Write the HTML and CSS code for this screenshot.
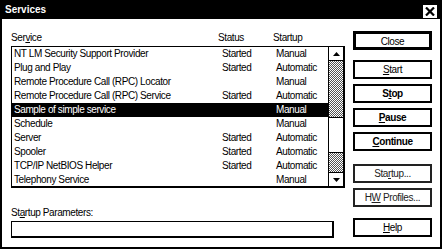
FILE: index.html
```html
<!DOCTYPE html>
<html lang="en">
<head>
    <meta charset="UTF-8">
    <title>Services</title>
    <link rel="stylesheet" href="styles.css">
</head>
<body>
    <div class="dialog">
        <div class="titlebar">
            <span class="title">Services</span>
            <span class="close-box">
                <svg width="10" height="9" viewBox="0 0 10 9"><path d="M1 0.5 L9 8.5 M9 0.5 L1 8.5" stroke="#000" stroke-width="2.2"/></svg>
            </span>
        </div>

        <div class="content">
            <div class="main">
                <div class="list-header">
                    <span>Ser<u>v</u>ice</span>
                    <span>Status</span>
                    <span>Startup</span>
                </div>

                <div class="listbox">
                    <div class="rows">
                        <div class="row"><span>NT LM Security Support Provider</span><span>Started</span><span>Manual</span></div>
                        <div class="row"><span>Plug and Play</span><span>Started</span><span>Automatic</span></div>
                        <div class="row"><span>Remote Procedure Call (RPC) Locator</span><span></span><span>Manual</span></div>
                        <div class="row"><span>Remote Procedure Call (RPC) Service</span><span>Started</span><span>Automatic</span></div>
                        <div class="row selected"><span>Sample of simple service</span><span></span><span>Manual</span></div>
                        <div class="row"><span>Schedule</span><span></span><span>Manual</span></div>
                        <div class="row"><span>Server</span><span>Started</span><span>Automatic</span></div>
                        <div class="row"><span>Spooler</span><span>Started</span><span>Automatic</span></div>
                        <div class="row"><span>TCP/IP NetBIOS Helper</span><span>Started</span><span>Automatic</span></div>
                        <div class="row"><span>Telephony Service</span><span></span><span>Manual</span></div>
                    </div>
                    <div class="scrollbar">
                        <div class="arrow arrow-up">
                            <svg width="7" height="4" viewBox="0 0 7 4"><polygon points="3.5,0 7,4 0,4" fill="#000"/></svg>
                        </div>
                        <div class="track track-top"></div>
                        <div class="thumb"></div>
                        <div class="track track-bottom"></div>
                        <div class="arrow arrow-down">
                            <svg width="7" height="4" viewBox="0 0 7 4"><polygon points="0,0 7,0 3.5,4" fill="#000"/></svg>
                        </div>
                    </div>
                </div>

                <label class="param-label" for="params">St<u>a</u>rtup Parameters:</label>
                <input class="param-input" id="params" type="text">
            </div>

            <div class="buttons">
                <button class="btn btn-default">Close</button>
                <button class="btn btn-start"><u>S</u>tart</button>
                <button class="btn btn-bold">S<u>t</u>op</button>
                <button class="btn btn-bold"><u>P</u>ause</button>
                <button class="btn btn-bold"><u>C</u>ontinue</button>
                <button class="btn btn-light btn-startup">Sta<u>r</u>tup...</button>
                <button class="btn btn-light">H<u>W</u> Profiles...</button>
                <button class="btn btn-help"><u>H</u>elp</button>
            </div>
        </div>
    </div>
</body>
</html>
```

FILE: styles.css
```css
body {
    margin: 0;
    background: #fff;
    font-family: "Liberation Sans", Arial, sans-serif;
    font-size: 10px;
    letter-spacing: -0.4px;
    color: #000;
    overflow: hidden;
}

.dialog {
    width: 442px;
    height: 249px;
    box-sizing: border-box;
    border: 2px solid #000;
    border-top: 0;
    background: #fff;
    display: flex;
    flex-direction: column;
}

.titlebar {
    height: 19px;
    background: #000;
    color: #fff;
    display: flex;
    justify-content: space-between;
    padding: 0 3px 0 3px;
}

.title {
    font-weight: bold;
    letter-spacing: 0;
    line-height: 19px;
}

.close-box {
    align-self: flex-end;
    margin-bottom: 1px;
    width: 14px;
    height: 13px;
    background: #fff;
    display: flex;
    justify-content: center;
    align-items: center;
}

.content {
    display: flex;
}

.main {
    width: 334px;
    padding: 12px 0 0 9px;
}

.list-header {
    height: 13px;
    line-height: 13px;
    display: grid;
    grid-template-columns: 207px 55px 1fr;
}

.listbox {
    margin-top: 2px;
    height: 142px;
    box-sizing: border-box;
    border: 1px solid #000;
    border-right-width: 2px;
    border-bottom-width: 2px;
    display: flex;
}

.rows {
    width: 316px;
}

.row {
    height: 14px;
    line-height: 14px;
    padding-left: 2px;
    display: grid;
    grid-template-columns: 208px 54px 1fr;
    white-space: nowrap;
}

.row.selected {
    background: #000;
    color: #fff;
}

.scrollbar {
    flex: 1;
    border-left: 1px solid #000;
    display: flex;
    flex-direction: column;
}

.arrow {
    height: 13px;
    display: flex;
    justify-content: center;
    align-items: center;
    background: #fff;
}

.arrow-up {
    border-bottom: 1px solid #000;
}

.arrow-down {
    border-top: 1px solid #000;
}

.track {
    background-image: repeating-conic-gradient(#555 0 25%, #fff 0 50%);
    background-size: 2px 2px;
}

.track-top {
    height: 56px;
}

.track-bottom {
    flex: 1;
}

.thumb {
    height: 34px;
    border-top: 1px solid #000;
    border-bottom: 1px solid #000;
    background: #fff;
}

.param-label {
    display: block;
    margin-top: 18px;
    height: 13px;
    line-height: 13px;
}

.param-input {
    display: block;
    margin: 2px 0 0 0;
    width: 323px;
    height: 17px;
    box-sizing: border-box;
    border: 1px solid #000;
    border-right-width: 2px;
    border-bottom-width: 2px;
    padding: 0;
    background: #fff;
}

.buttons {
    padding: 12px 0 0 8px;
    display: flex;
    flex-direction: column;
    gap: 5px;
}

.btn {
    width: 79px;
    height: 19px;
    box-sizing: border-box;
    border: 2px solid #000;
    background: #fff;
    color: #000;
    font-family: inherit;
    font-size: 10px;
    letter-spacing: -0.4px;
    padding: 0;
    line-height: 15px;
}

.btn-default {
    border-width: 3px;
}

.btn-start {
    margin-top: 5px;
}

.btn-bold {
    font-weight: bold;
}

.btn-light {
    border-color: #222;
    color: #222;
}

.btn-startup {
    margin-top: 8px;
}

.btn-help {
    margin-top: 6px;
}
```
